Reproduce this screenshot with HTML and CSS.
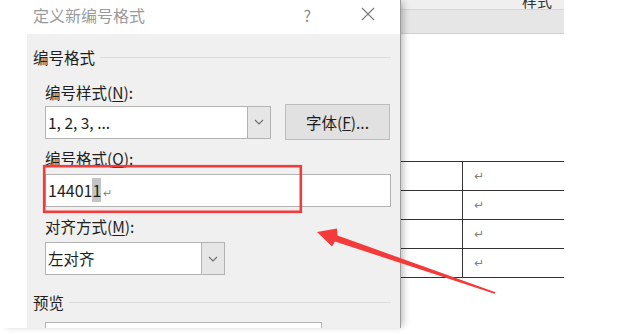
FILE: index.html
```html
<!DOCTYPE html>
<html>
  <head>
    <meta charset="utf-8">
    <title>定义新编号格式</title>
    <link rel="stylesheet" href="styles.css">
  </head>
  <body>
    <div id="stage">
      <div id="dialog">
        <div class="title-bar">
          <span class="title">定义新编号格式</span>
          <span class="help">?</span>
          <svg class="close" width="14" height="14" viewBox="0 0 14 14">
            <path d="M1 1L13 13M13 1L1 13" stroke="#7a7a7a" stroke-width="1.1" fill="none" />
          </svg>
        </div>

        <div class="dialog-body">
          <div class="group-label">编号格式</div>

          <div class="field-label label-style">编号样式(<u>N</u>):</div>
          <div class="row">
            <div class="combo combo-style">
              <span class="combo-text">1, 2, 3, ...</span>
              <span class="combo-btn">
                <svg width="10" height="6" viewBox="0 0 10 6"><path d="M1 1L5 5L9 1" stroke="#6e6e6e" stroke-width="1.1" fill="none" /></svg>
              </span>
            </div>
            <button class="btn">字体(<u>F</u>)...</button>
          </div>

          <div class="field-label label-format">编号格式(<u>O</u>):</div>
          <div class="text-box">
            <span class="combo-text">14401<span class="sel">1</span><span class="para">↵</span></span>
          </div>

          <div class="field-label label-align">对齐方式(<u>M</u>):</div>
          <div class="combo combo-align">
            <span class="combo-text">左对齐</span>
            <span class="combo-btn">
              <svg width="10" height="6" viewBox="0 0 10 6"><path d="M1 1L5 5L9 1" stroke="#6e6e6e" stroke-width="1.1" fill="none" /></svg>
            </span>
          </div>

          <div class="group-label group-preview">预览</div>
          <div class="preview-box"></div>
        </div>
      </div>

      <div class="doc">
        <div class="doc-head">
          <div class="doc-head-top"><span>样式</span></div>
          <div class="doc-head-band"></div>
        </div>
        <div class="doc-table">
          <div class="doc-row"><div class="cell"></div><div class="cell mark">↵</div></div>
          <div class="doc-row"><div class="cell"></div><div class="cell mark">↵</div></div>
          <div class="doc-row"><div class="cell"></div><div class="cell mark">↵</div></div>
          <div class="doc-row"><div class="cell"></div><div class="cell mark">↵</div></div>
        </div>
      </div>

      <!-- annotation drawn over the screenshot -->
      <svg class="annotation" width="620" height="334" viewBox="0 0 620 334">
        <rect x="44.2" y="166.2" width="256.6" height="45.6" fill="none" stroke="#f43b3b" stroke-width="2.6" />
        <polygon points="317,232 337,228.5 337.5,235.5 495.5,292.3 494.5,293.8 335,241.5 332,246.5" fill="#f43b3b" />
      </svg>
    </div>
  </body>
</html>
```

FILE: styles.css
```css
body {
  margin: 0;
  background: #fff;
  font-family: "Noto Sans CJK SC", "Noto Sans", sans-serif;
  color: #1e1e1e;
}

#stage {
  position: relative;
  width: 620px;
  height: 334px;
  overflow: hidden;
  display: flex;
  align-items: flex-start;
}

#dialog {
  position: relative;
  z-index: 1;
  width: 400px;
  height: 328px;
  flex: none;
  display: flex;
  flex-direction: column;
  background: #fff;
  border-right: 1px solid #9c9c9c;
  box-shadow: 4px 0 7px -2px rgba(0, 0, 0, 0.28);
}

.title-bar {
  height: 34px;
  flex: none;
  display: flex;
  align-items: flex-start;
  padding: 5px 25px 0 33px;
  box-sizing: border-box;
  line-height: 20px;
  font-size: 16px;
  color: #9a9a9a;
}

.title {
  flex: 1;
}

.help {
  margin-right: 50px;
  color: #8a8a8a;
}

.close {
  margin-top: 2px;
}

.dialog-body {
  flex: 1;
  margin-left: 27px;
  padding: 13px 9px 0 6px;
  background: #f0f0f0;
  overflow: hidden;
  font-size: 15.5px;
}

.group-label {
  display: flex;
  align-items: center;
  line-height: 20px;
}

.group-label::after {
  content: "";
  flex: 1;
  height: 1px;
  margin-left: 5px;
  background: #dcdcdc;
}

.field-label {
  margin-left: 12px;
  line-height: 20px;
}

.field-label u {
  text-underline-offset: 2px;
}

.label-style {
  margin-top: 15px;
  margin-bottom: 2px;
}

.label-format {
  margin-top: 8px;
  margin-bottom: 6px;
}

.label-align {
  margin-top: 9px;
  margin-bottom: 6px;
}

.row {
  display: flex;
  align-items: center;
  gap: 14px;
  height: 36px;
  margin-left: 12px;
}

.combo,
.text-box {
  display: flex;
  height: 33px;
  box-sizing: border-box;
  border: 1px solid #b3b3b3;
  background: #fff;
}

.combo-style {
  width: 226px;
}

.combo-align {
  width: 180px;
  margin-left: 12px;
}

.text-box {
  width: 346px;
  margin-left: 12px;
  font-size: 16px;
}

.combo-text {
  flex: 1;
  padding-left: 2px;
  line-height: 31px;
  white-space: nowrap;
}

.combo-btn {
  width: 22px;
  display: flex;
  align-items: center;
  justify-content: center;
  background: #e6e6e6;
  border-left: 1px solid #b3b3b3;
}

.sel {
  background: #c4c4c4;
}

.para {
  margin-left: 2px;
  font-size: 11px;
  color: #8a8a8a;
  font-family: "DejaVu Sans", sans-serif;
}

.btn {
  width: 105px;
  height: 36px;
  padding: 0;
  border: 1px solid #bdbdbd;
  background: #e1e1e1;
  font-family: inherit;
  font-size: 15.5px;
  color: #1e1e1e;
}

.group-preview {
  margin-top: 17px;
}

.preview-box {
  width: 277px;
  height: 40px;
  margin: 10px 0 0 12px;
  box-sizing: border-box;
  border: 1px solid #b3b3b3;
  background: #fff;
}

.doc {
  flex: 1;
  display: flex;
  flex-direction: column;
}

.doc-head {
  width: 163px;
}

.doc-head-top {
  height: 9px;
  overflow: hidden;
  display: flex;
  align-items: flex-end;
  justify-content: flex-end;
  padding-right: 12px;
  background: #efefef;
  border-bottom: 1px solid #d6d6d6;
  font-size: 15px;
  line-height: 20px;
  color: #333;
}

.doc-head-top span {
  margin-bottom: -2px;
}

.doc-head-band {
  height: 23px;
  background: #e6e6e6;
  border-bottom: 1px solid #d0d0d0;
}

.doc-table {
  width: 163px;
  margin-top: 127px;
  border-bottom: 1px solid #333;
}

.doc-row {
  display: grid;
  grid-template-columns: 62px 101px;
  height: 29px;
  box-sizing: border-box;
  border-top: 1px solid #333;
}

.cell:first-child {
  border-right: 1px solid #333;
}

.mark {
  padding-left: 11px;
  font-family: "DejaVu Sans", sans-serif;
  font-size: 12px;
  line-height: 28px;
  color: #808080;
}

.annotation {
  position: absolute;
  top: 0;
  left: 0;
  z-index: 2;
  pointer-events: none;
}
```
